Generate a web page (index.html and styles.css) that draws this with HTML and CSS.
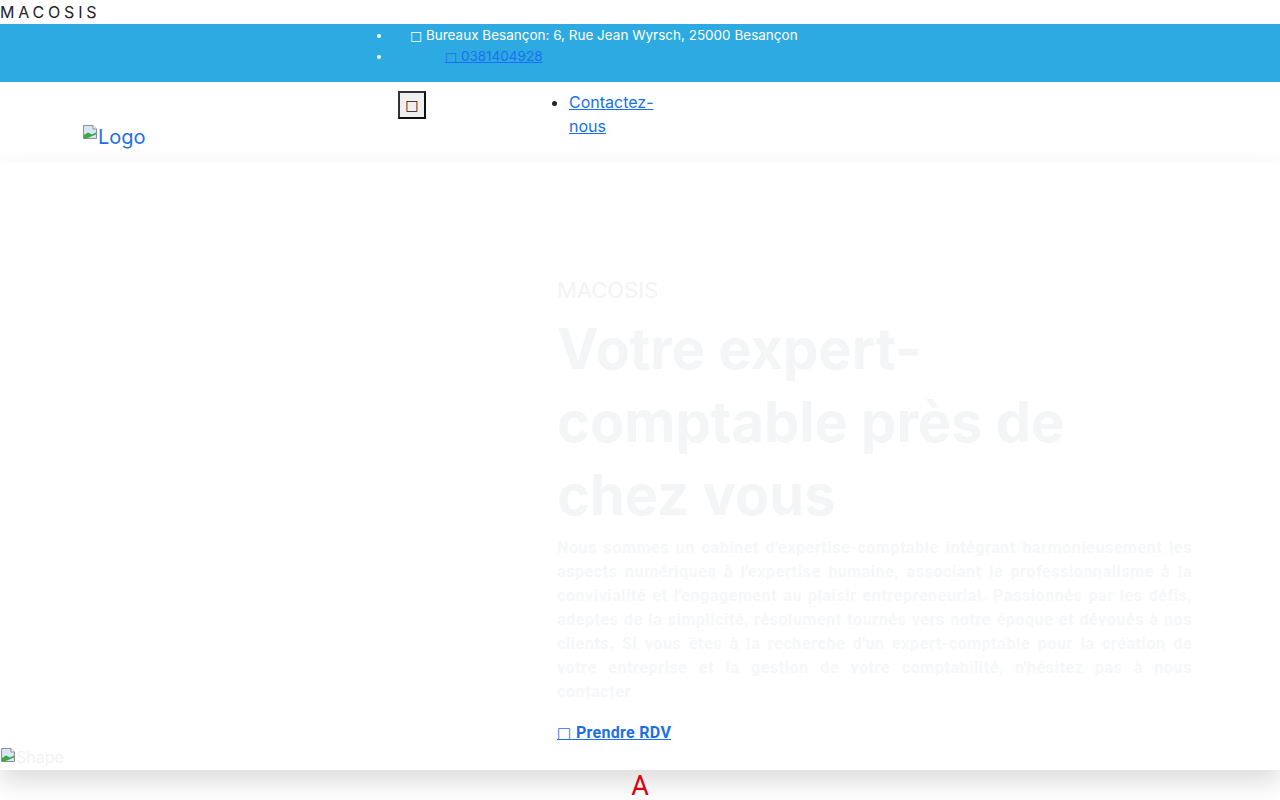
FILE: index.html
```html
<!DOCTYPE html>
<html lang="fr">
<head>
    <meta charset="UTF-8">
    <meta name="viewport" content="width=device-width, initial-scale=1.0">
    <title>MACOSIS - Expert-comptable à Besançon</title>
    <link rel="stylesheet" href="styles.css">
</head>
<body>
    <div class="brand-line">MACOSIS</div>

    <div class="topbar">
        <ul class="topbar-list">
            <li class="topbar-address"><span class="ico">□</span> Bureaux Besançon: 6, Rue Jean Wyrsch, 25000 Besançon</li>
            <li class="topbar-phone"><a href="tel:0381404928"><span class="ico">□</span> 0381404928</a></li>
        </ul>
    </div>

    <header class="header">
        <a href="/" class="logo">
            <svg class="broken" width="16" height="16" viewBox="0 0 16 16">
                <path d="M1.5 1.5h9.5l3.5 3.5v9.5h-13z" fill="#d6e6f5" stroke="#8f8f8f"/>
                <path d="M11 1.5v3.5h3.5" fill="#fff" stroke="#8f8f8f"/>
                <path d="M2 14.5v-3.5l4-2.5 4 2 4-2v2l-9.5 4z" fill="#3fa64a"/>
            </svg><span>Logo</span>
        </a>
        <button class="menu-toggle" type="button"><span class="ico">□</span></button>
        <ul class="nav-list">
            <li><a href="/contact">Contactez-nous</a></li>
        </ul>
    </header>

    <section class="hero">
        <div class="hero-inner">
            <div class="hero-side"></div>
            <div class="hero-text">
                <div class="hero-label">MACOSIS</div>
                <h1>Votre expert-comptable près de chez vous</h1>
                <p>Nous sommes un cabinet d'expertise-comptable intégrant harmonieusement les aspects numériques à l'expertise humaine, associant le professionnalisme à la convivialité et l'engagement au plaisir entrepreneurial. Passionnés par les défis, adeptes de la simplicité, résolument tournés vers notre époque et dévoués à nos clients. Si vous êtes à la recherche d'un expert-comptable pour la création de votre entreprise et la gestion de votre comptabilité, n'hésitez pas à nous contacter</p>
                <a href="/rdv" class="hero-cta"><span class="ico">□</span> Prendre RDV</a>
            </div>
        </div>
        <div class="hero-shape">
            <svg class="broken" width="16" height="16" viewBox="0 0 16 16">
                <path d="M1.5 1.5h9.5l3.5 3.5v9.5h-13z" fill="#d6e6f5" stroke="#8f8f8f"/>
                <path d="M11 1.5v3.5h3.5" fill="#fff" stroke="#8f8f8f"/>
                <path d="M2 14.5v-3.5l4-2.5 4 2 4-2v2l-9.5 4z" fill="#3fa64a"/>
            </svg><span>Shape</span>
        </div>
    </section>

    <div class="mark">A</div>
</body>
</html>
```

FILE: styles.css
```css
body {
    margin: 0;
    padding: 0;
    font-family: Inter, "Liberation Sans", sans-serif;
    background-color: #fff;
    color: #222;
}
a {
    color: #1a6ff0;
}
.ico {
    font-family: "DejaVu Sans", sans-serif;
    font-size: 0.95em;
}
.brand-line {
    font-size: 16px;
    line-height: 24px;
    letter-spacing: 3.8px;
}
.topbar {
    background-color: #2eaae3;
    color: #fff;
    font-size: 13.5px;
    line-height: 21px;
    height: 58px;
}
.topbar-list {
    margin: 0;
    padding: 1px 0 0 392px;
}
.topbar-address {
    padding-left: 18px;
}
.topbar-phone a {
    margin-left: 53px;
}
.header {
    display: flex;
    align-items: flex-start;
    height: 70px;
    padding: 8px 0 0 82px;
    box-shadow: 0 3px 4px rgba(0, 0, 0, 0.015);
    position: relative;
}
.logo {
    display: flex;
    align-items: flex-start;
    width: 316px;
    margin-top: 34px;
    font-size: 20px;
    text-decoration: none;
    line-height: 26px;
}
.broken {
    flex: none;
    margin-top: 0;
}
.menu-toggle {
    width: 28px;
    height: 28px;
    margin-top: 1px;
    padding: 0;
    border: 2px solid #111;
    border-color: #333 #111 #111 #333;
    background-color: #efefef;
    font-size: 15px;
    font-weight: 700;
    line-height: 1;
    color: #111;
}
.nav-list {
    width: 92px;
    margin: 0 0 0 103px;
    padding-left: 40px;
    font-size: 16px;
    line-height: 24px;
}
.hero {
    box-shadow: 0 12px 24px rgba(0, 0, 0, 0.14);
}
.hero-inner {
    display: grid;
    grid-template-columns: 475px 635px;
    padding: 117px 0 0 82px;
}
.hero-label {
    font-size: 22px;
    line-height: 26px;
    color: #f2f3f5;
}
.hero-text h1 {
    margin: 10px 0 4px;
    font-size: 56px;
    line-height: 73px;
    font-weight: 700;
    color: #f4f5f7;
}
.hero-text p {
    margin: 0 0 17px;
    font-family: Roboto, "Liberation Sans", sans-serif;
    font-size: 16px;
    line-height: 24px;
    font-weight: 700;
    letter-spacing: 0.6px;
    text-align: justify;
    color: #f6f7f9;
}
.hero-cta {
    display: inline-block;
    font-family: Roboto, "Liberation Sans", sans-serif;
    font-weight: 700;
    font-size: 16px;
    line-height: 24px;
    letter-spacing: 0.3px;
}
.hero-shape {
    display: flex;
    align-items: flex-start;
    height: 23px;
    padding-top: 2px;
    font-size: 16px;
    line-height: 20px;
    color: #f2f3f5;
}
.mark {
    text-align: center;
    color: #d90012;
    font-family: Roboto, "Liberation Sans", sans-serif;
    font-size: 27px;
    line-height: 32px;
}
```
